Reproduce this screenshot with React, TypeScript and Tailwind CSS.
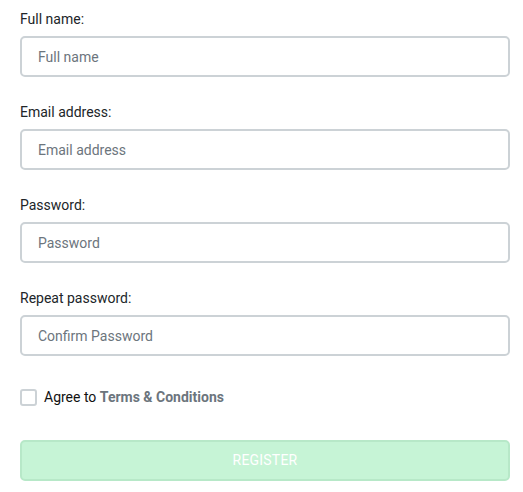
import React from "react";

const Field = ({ label, placeholder, type = "text" }: { label: string; placeholder: string; type?: string }) => (
  <div className="mb-[25px]">
    <label className="block text-[14px] leading-[20px] text-[#212529] mb-[7px]">{label}</label>
    <input
      type={type}
      placeholder={placeholder}
      className="block w-full h-[41px] rounded-[5px] border-2 border-[#ccd2d6] bg-white px-[16px] text-[14px] text-[#495057] placeholder:text-[#6c757d] outline-none"
    />
  </div>
);

export default function App() {
  return (
    <div className="bg-white w-[523px] h-[492px] px-[20px] pt-[9px] pr-[13px]" style={{ fontFamily: "Roboto, 'Liberation Sans', sans-serif" }}>
      <Field label="Full name:" placeholder="Full name" />
      <Field label="Email address:" placeholder="Email address" />
      <Field label="Password:" placeholder="Password" type="password" />
      <Field label="Repeat password:" placeholder="Confirm Password" type="password" />
      <div className="flex items-center mt-[31px] h-[20px]">
        <span className="w-[17px] h-[17px] rounded-[3px] border-2 border-[#ccd2d6] bg-white" />
        <span className="ml-[7px] text-[14px] text-[#111]">
          Agree to <span className="font-bold text-[#6c757d]">Terms &amp; Conditions</span>
        </span>
      </div>
      <button className="mt-[33px] w-full h-[41px] rounded-[5px] border-2 border-[#b7e8c8] bg-[#c6f4d6] text-white text-[14px] tracking-[0.2px] uppercase">
        Register
      </button>
    </div>
  );
}
